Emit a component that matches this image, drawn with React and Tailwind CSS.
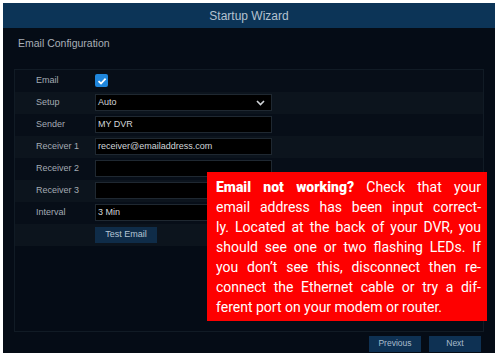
import React from "react";

const rows = [
  { label: "Email", kind: "check" },
  { label: "Setup", kind: "select", value: "Auto" },
  { label: "Sender", kind: "input", value: "MY DVR" },
  { label: "Receiver 1", kind: "input", value: "receiver@emailaddress.com" },
  { label: "Receiver 2", kind: "input", value: "" },
  { label: "Receiver 3", kind: "input", value: "" },
  { label: "Interval", kind: "input", value: "3 Min" },
  { label: "", kind: "button", value: "Test Email" },
];

const tipLines = [
  "email address has been input correct-",
  "ly. Located at the back of your DVR, you",
  "should see one or two flashing LEDs. If",
  "you don\u2019t see this, disconnect then re-",
  "connect the Ethernet cable or try a dif-",
];

function Field({ row }) {
  if (row.kind === "check") {
    return (
      <div className="w-[13px] h-[13px] rounded-[2px] bg-[#1f86dc] flex items-center justify-center">
        <svg width="10" height="10" viewBox="0 0 10 10">
          <path d="M1.5 5.2 L4 7.5 L8.6 2.6" fill="none" stroke="#fff" strokeWidth="1.8" />
        </svg>
      </div>
    );
  }
  if (row.kind === "button") {
    return (
      <div className="w-[62px] h-[16px] bg-[#0f2c48] text-[#b5c5d5] text-[9px] flex items-center justify-center">
        {row.value}
      </div>
    );
  }
  return (
    <div className="w-[177px] h-[17px] bg-black border border-[#1f2831] flex items-center justify-between pl-[2px] pr-[6px] text-[9px] text-[#d2d6da]">
      <span>{row.value}</span>
      {row.kind === "select" && (
        <svg width="9" height="6" viewBox="0 0 9 6">
          <path d="M1 1 L4.5 4.5 L8 1" fill="none" stroke="#d0d4d8" strokeWidth="1.6" />
        </svg>
      )}
    </div>
  );
}

export default function App() {
  return (
    <div className="w-[500px] h-[360px] bg-white pt-[3px] pl-[3px] font-['Liberation_Sans',Arial,sans-serif]">
      <div className="relative w-[492px] h-[350px] bg-[#050c16] flex flex-col">
        <div className="h-[25px] bg-[#0c3457] flex items-center justify-center text-[12px] text-[#b4c2d0]">
          Startup Wizard
        </div>
        <div className="pl-[15px] pt-[8px] text-[10.5px] text-[#a8afb7]">Email Configuration</div>

        <div className="mx-[11px] mt-[17px] h-[263px] border border-[#111b25]">
          {rows.map((row, i) => (
            <div
              key={i}
              className={
                "h-[22px] flex items-center " + (i % 2 === 1 ? "bg-[#0c141d]" : "bg-[#070e18]")
              }
            >
              <div className="w-[80px] pl-[21px] text-[9px] text-[#a3abb3]">{row.label}</div>
              <Field row={row} />
            </div>
          ))}
        </div>

        <div className="flex justify-end gap-[8px] pr-[14px] mt-[4px]">
          <div className="w-[52px] h-[16px] bg-[#0e3153] text-[8.5px] text-[#a9bccd] flex items-center justify-center">
            Previous
          </div>
          <div className="w-[52px] h-[16px] bg-[#0e3153] text-[8.5px] text-[#a9bccd] flex items-center justify-center">
            Next
          </div>
        </div>

        <div className="absolute left-[204px] top-[169px] w-[280px] h-[149px] bg-[#fe0000] pl-[9px] pr-[6px] pt-[5px] text-white text-[14px] leading-[20px] font-['Roboto',sans-serif]">
          <div className="text-justify [text-align-last:justify]">
            <span className="font-black">Email not working?</span> Check that your
          </div>
          {tipLines.map((l, i) => (
            <div key={i} className="text-justify [text-align-last:justify]">
              {l}
            </div>
          ))}
          <div>ferent port on your modem or router.</div>
        </div>
      </div>
    </div>
  );
}
